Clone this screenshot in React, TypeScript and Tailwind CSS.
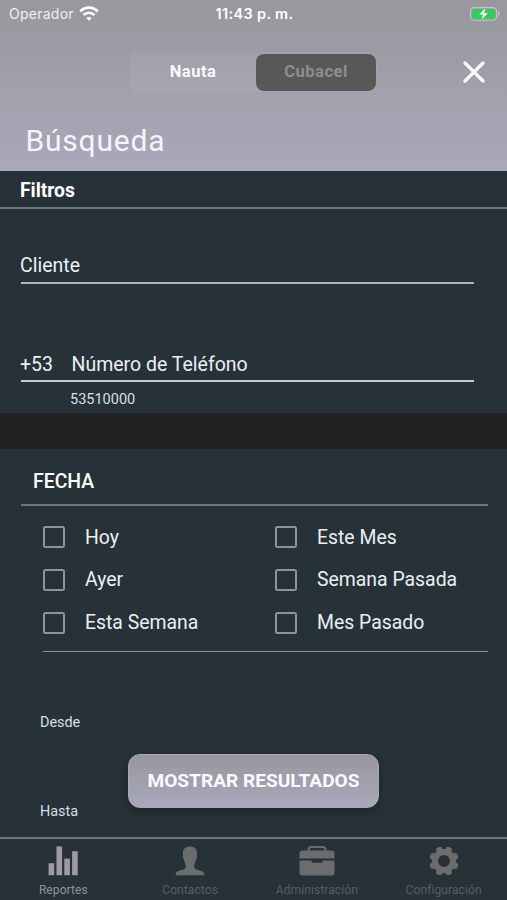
import { useState } from "react";

const RANGES = ["Hoy", "Este Mes", "Ayer", "Semana Pasada", "Esta Semana", "Mes Pasado"];

function WifiIcon() {
  return (
    <svg width="20" height="15" viewBox="0 0 18 14" fill="none" stroke="#fff" strokeWidth="2.5">
      <path d="M0.9 5.1 C5.4 0.4 12.6 0.4 17.1 5.1" />
      <path d="M4 8.4 C6.8 5.6 11.2 5.6 14 8.4" />
      <path d="M9 13.8 L6.5 11.2 C7.9 9.8 10.1 9.8 11.5 11.2 Z" fill="#fff" stroke="none" />
    </svg>
  );
}

function BatteryIcon() {
  return (
    <svg width="30" height="14" viewBox="0 0 30 14">
      <rect x="0.6" y="0.6" width="26" height="12.6" rx="3.6" fill="none" stroke="#c4c4cb" strokeWidth="1.1" />
      <path d="M28 4.6 C30 5.3 30 8.5 28 9.2 Z" fill="#c4c4cb" />
      <rect x="2.1" y="2.1" width="23" height="9.6" rx="2.2" fill="#34cc5a" />
      <path d="M15.3 1.2 L9.4 7.6 H13 L11.8 12.6 L17.8 6.2 H14.1 Z" fill="#fff" />
    </svg>
  );
}

function StatsIcon() {
  return (
    <svg width="30" height="30" viewBox="0 0 30 30" fill="currentColor">
      <rect x="0.6" y="17.2" width="5.6" height="12" />
      <rect x="8.5" y="0.4" width="5.6" height="28.8" />
      <rect x="16.3" y="12.6" width="5.6" height="16.6" />
      <rect x="24.1" y="5.2" width="5.6" height="24" />
    </svg>
  );
}

function PersonIcon() {
  return (
    <svg width="30" height="30" viewBox="0 0 30 30" fill="currentColor">
      <path d="M15 0.5 C10.7 0.5 7.9 2.8 8 7.2 C8 8.2 8.1 9 8.2 9.9 C7.5 10.5 8.3 13.2 9.1 13.7 C9.4 15.8 9.9 17 10.6 17.9 C10.9 19.6 10.8 21.2 10.2 22.2 C9.2 23.7 6.2 23.9 3.4 25 C1.6 25.7 0.7 27 0.5 29.3 H29.5 C29.3 27 28.4 25.7 26.6 25 C23.8 23.9 20.8 23.7 19.8 22.2 C19.2 21.2 19.1 19.6 19.4 17.9 C20.1 17 20.6 15.8 20.9 13.7 C21.7 13.2 22.5 10.5 21.8 9.9 C21.9 9 22 8.2 22 7.2 C22.1 2.8 19.3 0.5 15 0.5 Z" />
    </svg>
  );
}

function BriefcaseIcon() {
  return (
    <svg width="36" height="30" viewBox="0 0 36 30" fill="currentColor">
      <path d="M9.6 5.5 V3.7 Q9.6 1.1 12.2 1.1 H23.8 Q26.4 1.1 26.4 3.7 V5.5" fill="none" stroke="currentColor" strokeWidth="2" />
      <path d="M3.6 4.6 H32.4 Q35.5 4.6 35.5 7.7 V12.6 H0.5 V7.7 Q0.5 4.6 3.6 4.6 Z" />
      <path d="M0.5 14.6 H12.5 V15.5 Q12.5 16.7 13.7 16.7 H22.3 Q23.5 16.7 23.5 15.5 V14.6 H35.5 V26.5 Q35.5 29.6 32.4 29.6 H3.6 Q0.5 29.6 0.5 26.5 Z" />
    </svg>
  );
}

function GearIcon() {
  return (
    <svg width="30" height="30" viewBox="0 0 30 30" fill="currentColor">
      <circle cx="15" cy="15" r="9" fill="none" stroke="currentColor" strokeWidth="6" />
      {[0, 1, 2, 3, 4, 5, 6, 7].map((i) => (
        <path
          key={i}
          transform={`rotate(${22.5 + i * 45} 15 15)`}
          d="M10.6 5 Q11.9 3.4 12 1.6 Q12.1 0.6 13 0.4 Q15 0 17 0.4 Q17.9 0.6 18 1.6 Q18.1 3.4 19.4 5 Z"
        />
      ))}
    </svg>
  );
}

const TABS = [
  { label: "Reportes", icon: <StatsIcon />, color: "text-[#9b9aa6]", labelColor: "text-[#8f959e]" },
  { label: "Contactos", icon: <PersonIcon />, color: "text-[#6b6c6d]", labelColor: "text-[#555d61]" },
  { label: "Administración", icon: <BriefcaseIcon />, color: "text-[#6b6c6d]", labelColor: "text-[#555d61]" },
  { label: "Configuración", icon: <GearIcon />, color: "text-[#6b6c6d]", labelColor: "text-[#555d61]" },
];

export default function App() {
  const [checked, setChecked] = useState<string[]>([]);

  const toggle = (label: string) => {
    setChecked((prev) => (prev.includes(label) ? prev.filter((l) => l !== label) : [...prev, label]));
  };

  return (
    <div className="relative flex h-[900px] w-[507px] flex-col overflow-hidden bg-[#263238] font-['Roboto',sans-serif] text-[#eceff1]">
      {/* Header */}
      <header className="flex h-[171px] shrink-0 flex-col bg-linear-to-b from-[#97979c] to-[#aaa8ba]">
        <div className="grid h-[27px] grid-cols-3 items-center pr-[7px] pl-[9px] font-['Inter',sans-serif]">
          <div className="flex items-center gap-[5px] text-[14px] tracking-[0.25px] text-[#f0f0f4]">
            Operador
            <WifiIcon />
          </div>
          <div className="text-center text-[14.5px] font-semibold tracking-[0.35px] whitespace-nowrap text-white">11:43 p. m.</div>
          <div className="flex justify-end">
            <BatteryIcon />
          </div>
        </div>

        <div className="mt-[25px] flex h-10 items-center pr-[22px] pl-[130px]">
          <div className="flex h-10 w-[247px] items-center rounded-lg bg-white/5 text-[16.5px] font-bold tracking-[0.5px]">
            <button className="w-[126px] pt-px text-[#fafaff]">Nauta</button>
            <button className="h-[37px] w-[120px] rounded-[8px] bg-[#585858] pt-px text-[#8e8e8e]">Cubacel</button>
          </div>
          <button className="ml-auto">
            <svg width="22" height="22" viewBox="0 0 22 22" stroke="#fafaff" strokeWidth="3.2" strokeLinecap="round">
              <path d="M2 2 L20 20 M20 2 L2 20" />
            </svg>
          </button>
        </div>

        <h1 className="mt-[29px] pl-[25.5px] text-[30px] leading-[40px] tracking-[0.8px] text-[#f5f4fc]">Búsqueda</h1>
      </header>

      {/* Filters */}
      <section className="h-[242px] shrink-0">
        <h2 className="h-[38px] border-b-2 border-[#69777b] pl-5 text-[19.3px] leading-[39px] font-bold text-white">Filtros</h2>
        <div className="ml-[21px] h-[75px] w-[453px] border-b-2 border-[#aab6b9] pt-11 text-[19.5px] leading-[26px]">
          <span className="-ml-px">Cliente</span>
        </div>
        <div className="ml-[21px] flex h-[98px] w-[453px] border-b-2 border-[#c5ced2] pt-[68px] text-[19.5px] leading-[26px]">
          <span className="-ml-px w-[51.5px]">+53</span>
          <span>Número de Teléfono</span>
        </div>
        <p className="pt-[7px] pl-[70px] text-[14.5px] leading-[22px] text-[#d9dfe1]">53510000</p>
      </section>

      <div className="h-9 shrink-0 bg-[#212121]" />

      {/* Date */}
      <section className="h-[388px] shrink-0">
        <h2 className="ml-[21px] h-[57px] w-[467px] border-b-2 border-[#69777b] pl-3 text-[19.4px] leading-[65px] font-medium text-white">FECHA</h2>
        <div className="ml-[43px] grid h-[146px] w-[445px] grid-cols-[232px_1fr] auto-rows-[42.7px] border-b border-[#84918f] pt-[10px]">
          {RANGES.map((label) => (
            <button key={label} onClick={() => toggle(label)} className="flex items-center gap-5 text-left text-[19.4px]">
              <span className="flex size-[22px] items-center justify-center rounded-[2.5px] border-2 border-[#8b9599]">
                {checked.includes(label) && <span className="size-3 bg-[#8b9599]" />}
              </span>
              {label}
            </button>
          ))}
        </div>
        <p className="mt-[61px] pl-10 text-[14.4px] leading-5 text-[#d9dfe1]">Desde</p>
        <p className="mt-[69px] pl-10 text-[14.4px] leading-5 text-[#d9dfe1]">Hasta</p>
      </section>

      {/* Floating action */}
      <button className="absolute top-[754px] left-[128px] h-[54px] w-[251px] rounded-[12px] border border-[#a5a9b3] bg-linear-to-b from-[#98979d] to-[#aaa8bb] text-[19.1px] font-bold text-[#fafaff] shadow-[0_4px_8px_rgba(0,0,0,0.25)]">
        MOSTRAR RESULTADOS
      </button>

      {/* Tab bar */}
      <nav className="grid h-[63px] shrink-0 grid-cols-4 border-t-2 border-[#69777b] bg-[#263238]">
        {TABS.map((tab) => (
          <div key={tab.label} className="flex flex-col items-center pt-[7px]">
            <span className={tab.color}>{tab.icon}</span>
            <span className={`mt-[6px] text-[12px] leading-4 tracking-[0.1px] ${tab.labelColor}`}>{tab.label}</span>
          </div>
        ))}
      </nav>
    </div>
  );
}
